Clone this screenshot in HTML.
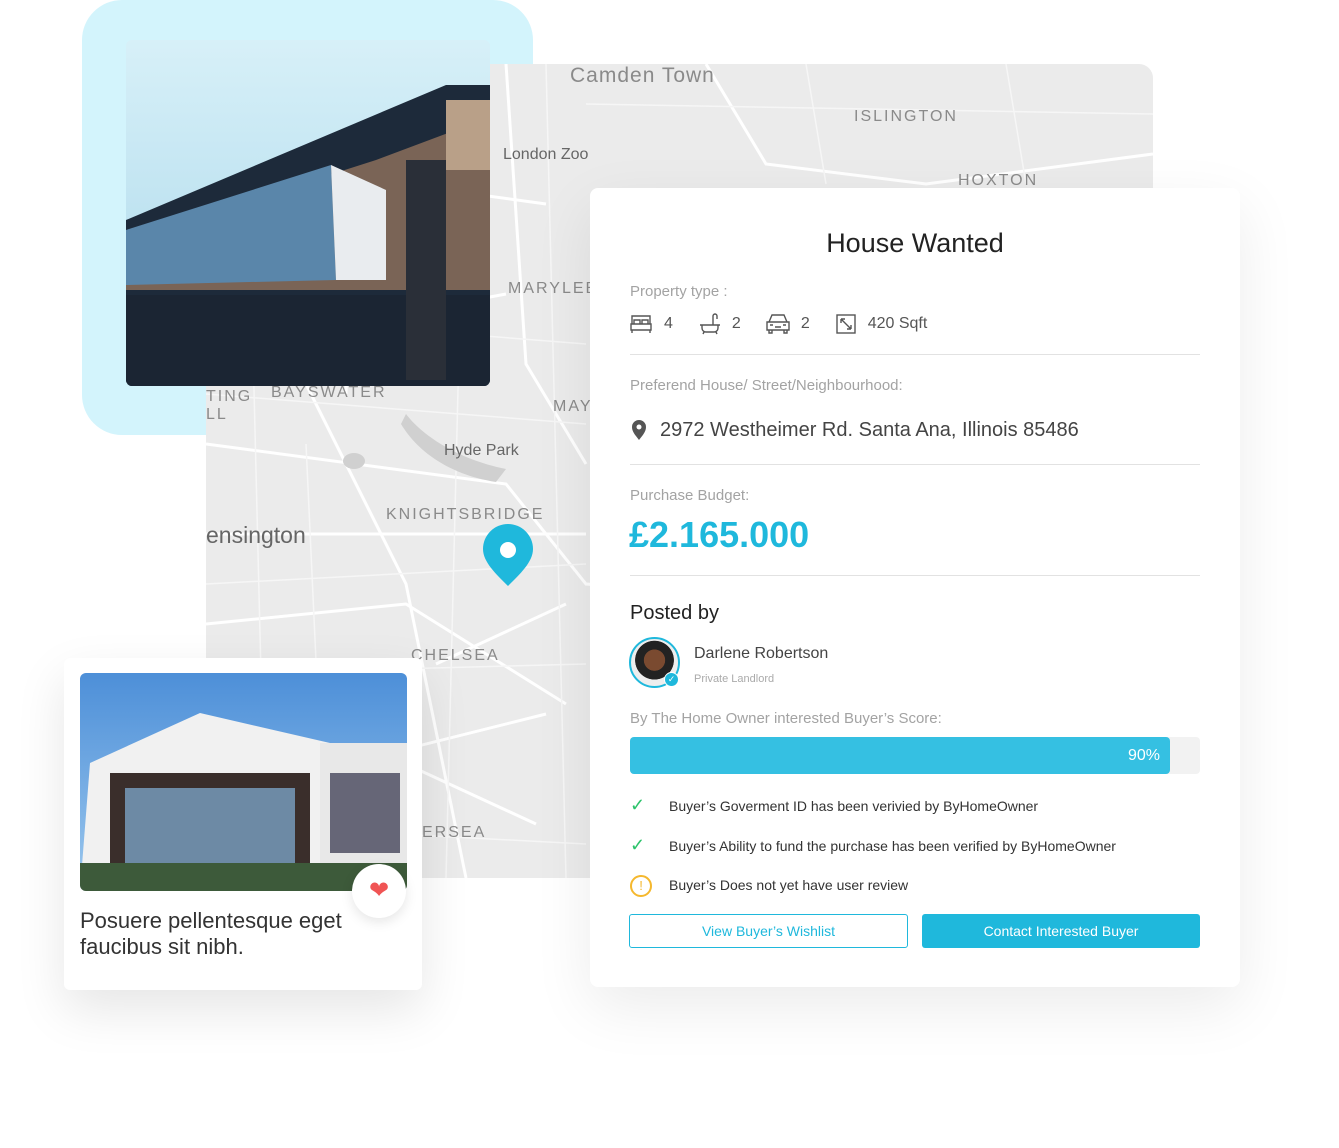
<!DOCTYPE html>
<html><head><meta charset="utf-8"><style>
*{margin:0;padding:0;box-sizing:border-box}
body{width:1339px;height:1148px;background:#fff;position:relative;overflow:hidden;font-family:"Liberation Sans",sans-serif;color:#333}
.abs{position:absolute}
.map{left:206px;top:64px;width:947px;height:814px;background:#ebebeb;border-radius:14px;overflow:hidden}
.lbl{position:absolute;color:#8a8a8a;letter-spacing:2px;font-size:16px}
.card{left:590px;top:188px;width:650px;height:799px;background:#fff;border-radius:8px;box-shadow:0 20px 60px rgba(0,0,0,.08)}
.gray{color:#a3a3a3;font-size:15px}
.hr{position:absolute;left:40px;width:570px;height:1px;background:#e2e2e2}
</style></head><body>
<div class="abs" style="left:82px;top:0;width:451px;height:435px;background:#d3f4fc;border-radius:40px"></div>
<div class="abs map">
<svg width="947" height="814" style="position:absolute;left:0;top:0">
<g stroke="#fff" stroke-width="3" fill="none">
<path d="M0 380 L300 420 L380 520 L947 560"/><path d="M90 300 L200 520 L260 814"/><path d="M300 0 L320 300 L380 400"/>
<path d="M0 560 L200 540 L360 640"/><path d="M500 0 L560 100 L720 120 L947 90"/><path d="M0 470 L380 470"/>
<path d="M20 200 L140 260 L300 230"/><path d="M0 650 L200 700 L330 760"/><path d="M150 0 L140 330"/>
<path d="M50 100 L340 140"/><path d="M230 600 L360 540"/><path d="M60 720 L340 650"/>
</g>
<g stroke="#f6f6f6" stroke-width="1.5" fill="none">
<path d="M0 330 L380 360"/><path d="M40 0 L60 814"/><path d="M0 610 L380 600"/><path d="M260 0 L240 814"/><path d="M0 250 L380 280"/><path d="M340 0 L360 814"/><path d="M600 0 L620 120"/><path d="M800 0 L820 120"/><path d="M380 40 L947 50"/><path d="M0 520 L380 500"/><path d="M100 380 L120 814"/><path d="M0 760 L380 780"/>
</g>
<path d="M200 350 C215 370 250 395 300 405 L290 418 C240 410 210 385 195 360Z" fill="#d0d0d0"/>
<ellipse cx="148" cy="397" rx="11" ry="8" fill="#d0d0d0"/>
</svg>
<div class="lbl" style="left:364px;top:0;font-size:21px;letter-spacing:1px">Camden Town</div>
<div class="lbl" style="left:648px;top:44px">ISLINGTON</div>
<div class="lbl" style="left:752px;top:108px">HOXTON</div>
<div class="lbl" style="left:297px;top:82px;color:#666;letter-spacing:0">London Zoo</div>
<div class="lbl" style="left:302px;top:216px">MARYLEB</div>
<div class="lbl" style="left:0;top:324px">TING<br>LL</div>
<div class="lbl" style="left:65px;top:320px">BAYSWATER</div>
<div class="lbl" style="left:347px;top:334px">MAY</div>
<div class="lbl" style="left:238px;top:378px;color:#666;letter-spacing:0">Hyde Park</div>
<div class="lbl" style="left:180px;top:442px">KNIGHTSBRIDGE</div>
<div class="lbl" style="left:0;top:458px;font-size:23px;color:#666;letter-spacing:0">ensington</div>
<div class="lbl" style="left:205px;top:583px">CHELSEA</div>
<div class="lbl" style="left:216px;top:760px">ERSEA</div>
<svg width="52" height="62" style="position:absolute;left:276px;top:460px" viewBox="0 0 52 62"><path d="M26 62 C14 50 1 38 1 25 A25 25 0 0 1 51 25 C51 38 38 50 26 62Z" fill="#1fb8dc"/><circle cx="26" cy="26" r="8" fill="#fff"/></svg>
</div>
<div class="abs" style="left:126px;top:40px;width:364px;height:346px;border-radius:6px;overflow:hidden;background:linear-gradient(180deg,#d7f0f8,#a9d7ea)">
<svg width="364" height="346"><polygon points="0,180 320,45 364,45 364,346 0,346" fill="#1d2a3a"/><polygon points="0,200 250,120 330,90 364,95 364,250 0,250" fill="#7a6456"/><polygon points="0,190 205,125 210,240 0,245" fill="#5a86aa"/><polygon points="205,125 260,150 260,240 210,240" fill="#e9ecef"/><rect x="0" y="255" width="364" height="91" fill="#1b2533"/><rect x="280" y="120" width="40" height="220" fill="#2a2f38"/><rect x="320" y="60" width="44" height="70" fill="#b9a088"/></svg>
</div>
<div class="abs" style="left:64px;top:658px;width:358px;height:332px;background:#fff;border-radius:6px;box-shadow:0 20px 50px rgba(0,0,0,.1)"></div>
<div class="abs" style="left:80px;top:673px;width:327px;height:218px;border-radius:6px;overflow:hidden;background:linear-gradient(180deg,#4d8fd8,#9cc8ee)">
<svg width="327" height="218"><polygon points="10,90 120,40 250,70 327,90 327,218 0,218" fill="#f1f1f1"/><rect x="30" y="100" width="200" height="118" fill="#3a2e2b"/><rect x="45" y="115" width="170" height="80" fill="#6d8aa5"/><rect x="240" y="70" width="87" height="148" fill="#e8e8e8"/><rect x="250" y="100" width="70" height="80" fill="#667"/><rect x="0" y="190" width="327" height="28" fill="#3d5a3a"/></svg>
</div>
<div class="abs" style="left:352px;top:864px;width:54px;height:54px;border-radius:50%;background:#fff;box-shadow:0 4px 12px rgba(0,0,0,.1);text-align:center;line-height:54px;color:#f05454;font-size:24px">&#10084;</div>
<div class="abs" style="left:80px;top:908px;font-size:22px;line-height:26px;color:#333">Posuere pellentesque eget<br>faucibus sit nibh.</div>
<div class="abs card">
<div class="abs" style="left:0;top:40px;width:650px;text-align:center;font-size:27px;color:#222">House Wanted</div>
<div class="abs gray" style="left:40px;top:95px">Property type :</div>
<div class="abs" style="left:40px;top:125px;font-size:16px;color:#555;display:flex;align-items:center;gap:0">
<svg width="22" height="20" viewBox="0 0 22 20" fill="none" stroke="#555" stroke-width="1.4"><path d="M2 2h18v8H2zM1 10h20v6H1zM2 16v3M20 16v3M4 10V6h6v4M12 10V6h6v4"/></svg><span style="margin:0 26px 0 12px">4</span>
<svg width="22" height="22" viewBox="0 0 22 22" fill="none" stroke="#555" stroke-width="1.4"><path d="M1 12h20M3 12v3a4 4 0 004 4h8a4 4 0 004-4v-3M5 19l-1 2M17 19l1 2M14 12V3a2 2 0 014 0v3"/></svg><span style="margin:0 24px 0 11px">2</span>
<svg width="26" height="22" viewBox="0 0 26 22" fill="none" stroke="#555" stroke-width="1.4"><path d="M4 9l3-7h12l3 7M2 9h22v8H2zM4 17v3h3v-3M19 17v3h3v-3M5 12h3M18 12h3M10 14h6"/></svg><span style="margin:0 26px 0 10px">2</span>
<svg width="20" height="20" viewBox="0 0 20 20" fill="none" stroke="#555" stroke-width="1.4"><rect x="1" y="1" width="18" height="18"/><path d="M5 5l10 10M5 5v4M5 5h4M15 15v-4M15 15h-4"/></svg><span style="margin-left:12px">420 Sqft</span>
</div>
<div class="hr" style="top:166px"></div>
<div class="abs gray" style="left:40px;top:189px">Preferend House/ Street/Neighbourhood:</div>
<div class="abs" style="left:42px;top:232px"><svg width="14" height="20" viewBox="0 0 14 20"><path d="M7 20C4 16 0 12 0 7a7 7 0 0114 0c0 5-4 9-7 13z" fill="#555"/><circle cx="7" cy="7" r="2.5" fill="#fff"/></svg></div>
<div class="abs" style="left:70px;top:231px;font-size:20px;color:#444">2972 Westheimer Rd. Santa Ana, Illinois 85486</div>
<div class="hr" style="top:276px"></div>
<div class="abs gray" style="left:40px;top:299px">Purchase Budget:</div>
<div class="abs" style="left:39px;top:326px;font-size:36px;font-weight:bold;color:#1fb8dc">£2.165.000</div>
<div class="hr" style="top:387px"></div>
<div class="abs" style="left:40px;top:414px;font-size:20px;color:#222">Posted by</div>
<div class="abs" style="left:39px;top:449px;width:51px;height:51px;border-radius:50%;border:2px solid #1fb8dc;background:radial-gradient(circle at 50% 45%,#7a4a30 0 30%,#222 31% 55%,#eee 56%)"></div>
<div class="abs" style="left:74px;top:484px;width:15px;height:15px;border-radius:50%;background:#1fb8dc;border:1.5px solid #fff;color:#fff;font-size:9px;text-align:center;line-height:12px">✓</div>
<div class="abs" style="left:104px;top:457px;font-size:16px;color:#444">Darlene Robertson</div>
<div class="abs" style="left:104px;top:485px;font-size:11px;color:#aaa">Private Landlord</div>
<div class="abs gray" style="left:40px;top:522px">By The Home Owner interested Buyer’s Score:</div>
<div class="abs" style="left:40px;top:549px;width:570px;height:37px;background:#f2f2f2;border-radius:4px"></div>
<div class="abs" style="left:40px;top:549px;width:540px;height:37px;background:#35c0e2;border-radius:4px;color:#fff;font-size:16px;text-align:right;padding-right:10px;line-height:37px">90%</div>
<div class="abs" style="left:40px;top:598px;font-size:14px;color:#333;line-height:39px">
<div><span style="color:#2cc36b;display:inline-block;width:39px;font-size:18px">✓</span>Buyer’s Goverment ID has been verivied by ByHomeOwner</div>
<div><span style="color:#2cc36b;display:inline-block;width:39px;font-size:18px">✓</span>Buyer’s Ability to fund the purchase has been verified by ByHomeOwner</div>
<div style="display:flex;align-items:center;height:39px"><span style="display:inline-block;width:22px;height:22px;border:2px solid #f5b82e;border-radius:50%;color:#f5b82e;font-size:13px;text-align:center;line-height:18px;margin-right:17px">!</span>Buyer’s Does not yet have user review</div>
</div>
<div class="abs" style="left:39px;top:726px;width:279px;height:34px;border:1px solid #1fb8dc;border-radius:3px;color:#1fb8dc;text-align:center;line-height:32px;font-size:14px">View Buyer’s Wishlist</div>
<div class="abs" style="left:332px;top:726px;width:278px;height:34px;background:#1fb8dc;border-radius:3px;color:#fff;text-align:center;line-height:34px;font-size:14px">Contact Interested Buyer</div>
</div>
</body></html>
